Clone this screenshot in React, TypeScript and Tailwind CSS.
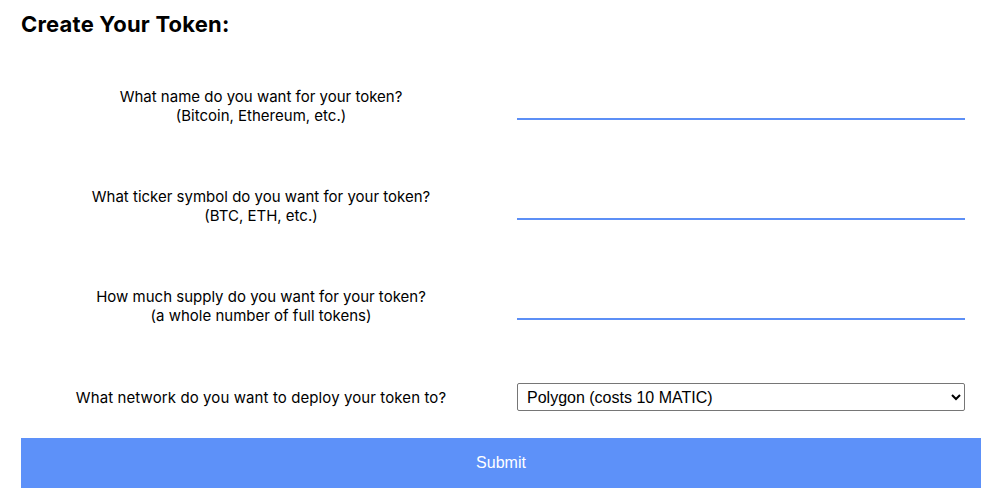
import React, { useState } from 'react';

const fields = [
  { q: 'What name do you want for your token?', hint: '(Bitcoin, Ethereum, etc.)' },
  { q: 'What ticker symbol do you want for your token?', hint: '(BTC, ETH, etc.)' },
  { q: 'How much supply do you want for your token?', hint: '(a whole number of full tokens)' },
];

export default function App() {
  const [values, setValues] = useState(['', '', '']);
  const [network, setNetwork] = useState('polygon');

  return (
    <div className="w-[1000px] h-[500px] bg-white text-black font-['Inter',sans-serif] px-[21px]">
      <h1 className="pt-[11px] text-[22px] tracking-[0.2px] font-bold leading-[27px]">Create Your Token:</h1>

      <form className="mt-[18px]" onSubmit={(e) => e.preventDefault()}>
        {fields.map((f, i) => (
          <div key={i} className="flex items-center h-[100px]">
            <div className="w-[480px] mr-4 text-center text-[15px] leading-[19px]">
              <div>{f.q}</div>
              <div>{f.hint}</div>
            </div>
            <input
              className="w-[448px] h-[28px] border-b-2 border-[#5c8ff6] outline-none text-base"
              value={values[i]}
              onChange={(e) => setValues(values.map((v, j) => (j === i ? e.target.value : v)))}
            />
          </div>
        ))}

        <div className="flex items-center h-[82px]">
          <div className="w-[480px] mr-4 text-center text-[15px] tracking-[0.1px] leading-[19px]">
            What network do you want to deploy your token to?
          </div>
          <select
            className="w-[448px] h-[28px] border border-[#767676] rounded-[2px] pl-[5px] text-base font-['Liberation_Sans',Arial,sans-serif] bg-white"
            value={network}
            onChange={(e) => setNetwork(e.target.value)}
          >
            <option value="polygon">Polygon (costs 10 MATIC)</option>
            <option value="ethereum">Ethereum</option>
          </select>
        </div>

        <button
          type="submit"
          className="w-[960px] h-[50px] bg-[#5d91f9] text-white text-base font-['Liberation_Sans',Arial,sans-serif]"
        >
          Submit
        </button>
      </form>
    </div>
  );
}
